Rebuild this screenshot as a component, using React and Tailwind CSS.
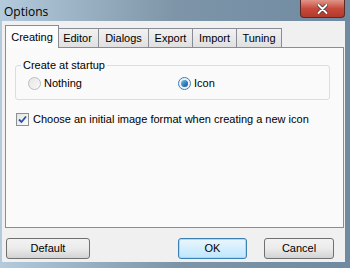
import React from 'react';

const font = { fontFamily: '"Liberation Sans", "DejaVu Sans", sans-serif' };

const Tab = ({ label, active, w }) => (
  <div
    className={`flex items-center justify-center border border-[#898c95] border-b-0 text-[11px] text-black ${w} ${
      active
        ? 'h-[23px] bg-[#fcfcfc] -mb-px relative z-10 -mx-[2px]'
        : 'h-[19px] bg-gradient-to-b from-[#f2f2f2] to-[#e0e0e0] mt-[2px] -ml-px first:ml-0'
    }`}
  >
    {label}
  </div>
);

const Btn = ({ label, focused, className }) => (
  <div
    className={`h-[21px] flex items-center justify-center rounded-[3px] border text-[11px] text-black ${
      focused
        ? 'border-[#3c7fb1] bg-gradient-to-b from-[#eaf6fd] to-[#bee6fd] shadow-[inset_0_0_0_1px_#a5dcf8]'
        : 'border-[#707070] bg-gradient-to-b from-[#f2f2f2] via-[#ebebeb] to-[#d3d3d3]'
    } ${className}`}
  >
    {label}
  </div>
);

export default function App() {
  return (
    <div
      className="w-[350px] h-[268px] flex flex-col bg-gradient-to-r from-[#b4cbdd] via-[#7e95a8] to-[#6f8aa1] overflow-hidden"
      style={font}
    >
      {/* title bar */}
      <div className="h-[21px] flex items-start relative">
        <span className="ml-[4px] mt-[3px] text-[12px] text-black" style={{ fontFamily: '"Open Sans", "DejaVu Sans", sans-serif' }}>
          Options
        </span>
        <div className="absolute left-[300px] top-0 w-[45px] h-[18px] rounded-b-[4px] border border-t-0 border-[#5a2a26] bg-gradient-to-b from-[#e0958a] via-[#c74a3c] to-[#b23a2b] flex items-center justify-center">
          <svg width="11" height="10" viewBox="0 0 11 10">
            <path d="M1.5 1 L9.5 9 M9.5 1 L1.5 9" stroke="#3a2a2a" strokeWidth="3.4" strokeLinecap="round" />
            <path d="M1.5 1 L9.5 9 M9.5 1 L1.5 9" stroke="#ffffff" strokeWidth="2" strokeLinecap="round" />
          </svg>
        </div>
      </div>

      {/* client */}
      <div className="flex-1 ml-[2px] mr-[5px] mb-[6px] bg-[#f0f0f0] flex flex-col">
        <div className="flex items-end pl-[5px] pt-[4px]">
          <Tab label="Creating" active w="w-[54px]" />
          <Tab label="Editor" w="w-[43px]" />
          <Tab label="Dialogs" w="w-[51px]" />
          <Tab label="Export" w="w-[45px]" />
          <Tab label="Import" w="w-[45px]" />
          <Tab label="Tuning" w="w-[46px]" />
        </div>
        <div className="ml-[3px] mr-px h-[181px] border border-[#898c95] bg-[#fafafa] flex flex-col pl-[9px] pr-[13px] pt-[12px]">
          <div className="relative border border-[#d5dfe5] rounded-[3px] h-[35px] mt-[5px] flex items-center">
            <span className="absolute left-[5px] -top-[8px] bg-[#fafafa] px-[2px] text-[11px] leading-[14px] text-black">
              Create at startup
            </span>
            <div className="flex items-center ml-[12px] w-[150px] mt-[2px]">
              <span className="w-[13px] h-[13px] rounded-full border border-[#b8bcc0] bg-gradient-to-br from-[#e6e6e6] to-[#f8f8f8] mr-[2px]" />
              <span className="text-[11px] text-black ml-[1px]">Nothing</span>
            </div>
            <div className="flex items-center mt-[2px]">
              <span className="w-[13px] h-[13px] rounded-full border border-[#3c7fb1] bg-[#eaf3fb] flex items-center justify-center mr-[2px]">
                <span className="w-[7px] h-[7px] rounded-full bg-gradient-to-br from-[#6ec3f3] to-[#0b4d8c]" />
              </span>
              <span className="text-[11px] text-black ml-[1px]">Icon</span>
            </div>
          </div>
          <div className="flex items-center mt-[11px] ml-[1px]">
            <span className="w-[13px] h-[13px] border border-[#8e8f8f] bg-gradient-to-br from-[#e4e4e4] to-[#fbfbfb] flex items-center justify-center">
              <svg width="9" height="9" viewBox="0 0 9 9">
                <path d="M1 4.5 L3.5 7 L8 1.5" stroke="#2b4ea8" strokeWidth="1.8" fill="none" />
              </svg>
            </span>
            <span className="text-[11px] text-black ml-[4px]">Choose an initial image format when creating a new icon</span>
          </div>
        </div>
        <div className="flex items-center mt-[10px] px-[4px]">
          <Btn label="Default" className="w-[84px]" />
          <Btn label="OK" focused className="w-[69px] ml-[88px]" />
          <Btn label="Cancel" className="w-[70px] ml-[17px]" />
        </div>
      </div>
    </div>
  );
}
